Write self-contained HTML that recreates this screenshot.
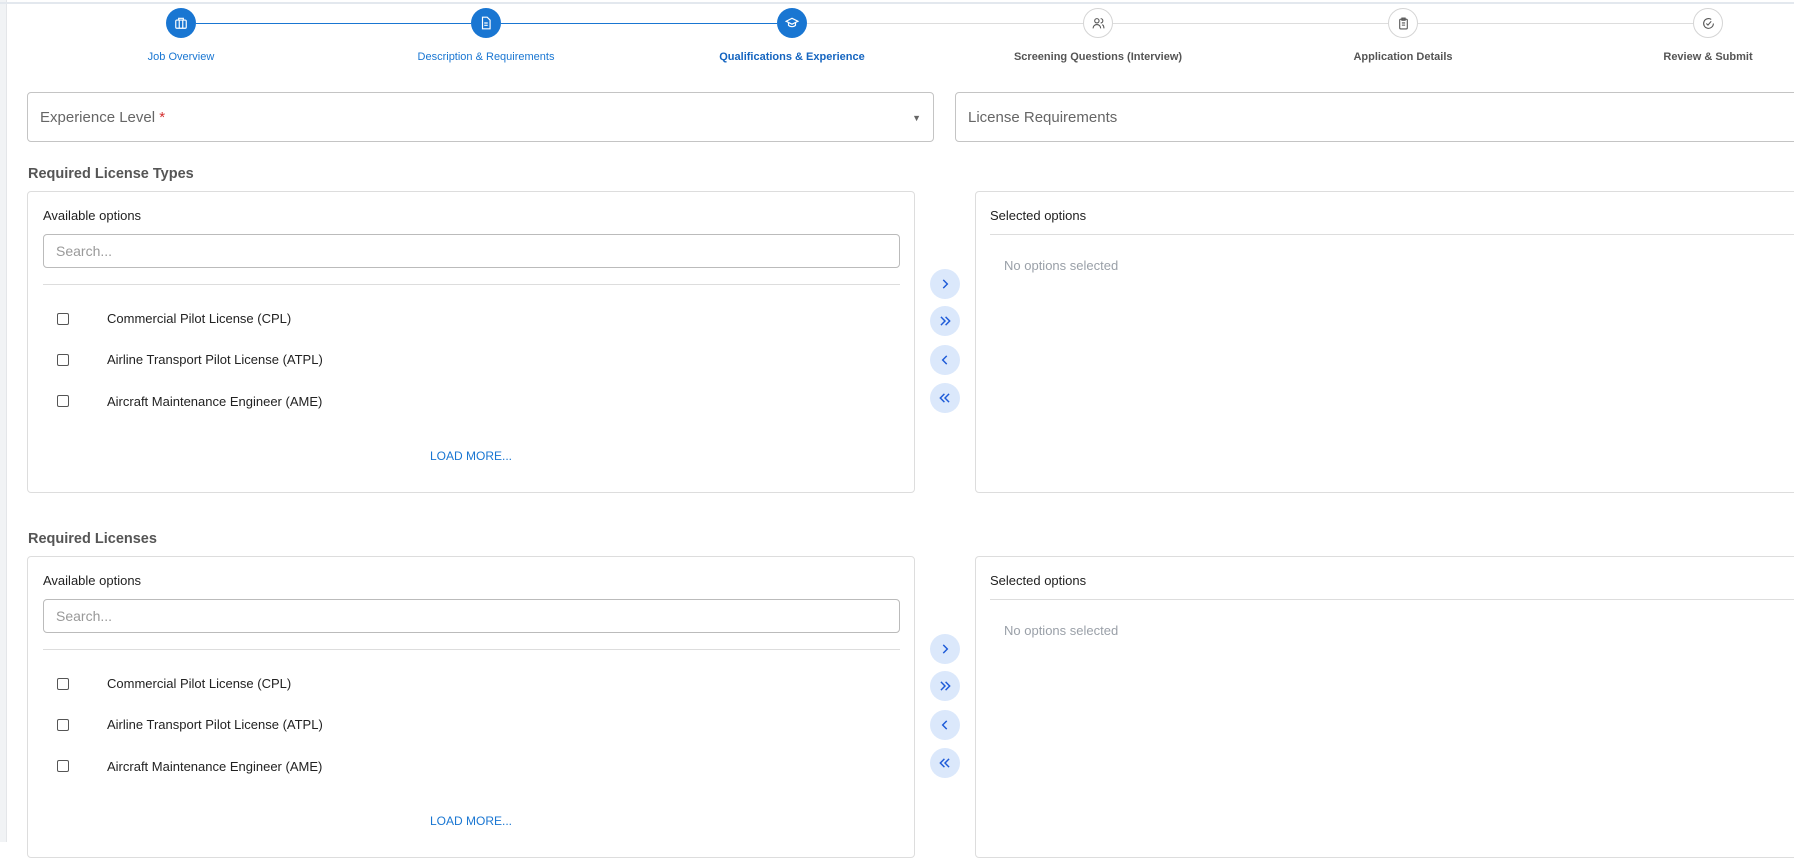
<!DOCTYPE html>
<html><head><meta charset="utf-8"><style>
*{box-sizing:border-box;margin:0;padding:0}
body{width:1794px;height:842px;overflow:hidden;background:#fff;font-family:"Liberation Sans",sans-serif;position:relative;color:#222}
.a{position:absolute}
.topline{left:0;top:0;width:1794px;height:4px;border-bottom:2px solid #e3e8ee}
.lbar{left:0;top:0;width:7px;height:842px;background:#f1f3f5;border-right:1px solid #e4e6e9}
.circ{width:30px;height:30px;border-radius:50%;display:flex;align-items:center;justify-content:center}
.done{background:#1976d2}
.todo{background:#fff;border:1px solid #d5d5d5}
.lbl{font-size:11px;top:51px;transform:translateX(-50%);white-space:nowrap}
.line{height:1px;top:23px}
.field{border:1px solid #c4c4c4;border-radius:4px;height:50px;font-size:15px;color:#666;padding:0 0 0 12px;line-height:50px}
.h{font-size:14.5px;font-weight:bold;color:#555}
.panel{border:1px solid #ddd;border-radius:4px}
.t13{font-size:13px;color:#222}
.search{border:1px solid #bbb;border-radius:4px;height:34px;font-size:14px;color:#999;padding-left:12px;line-height:32px}
.div{height:1px;background:#ddd}
.cb{width:12px;height:12px;border:1.5px solid #555;border-radius:2px}
.item{font-size:13px;color:#222}
.lm{font-size:12px;color:#1976d2;transform:translateX(-50%)}
.btn{width:30px;height:30px;border-radius:50%;background:#dbe8fb;display:flex;align-items:center;justify-content:center}
.nos{font-size:13px;color:#9aa0a8}
</style></head><body>
<div class="a lbar"></div>
<div class="a topline"></div>

<div class="a line" style="left:196px;width:275px;background:#1976d2"></div>
<div class="a line" style="left:501px;width:276px;background:#1976d2"></div>
<div class="a line" style="left:807px;width:276px;background:#ddd"></div>
<div class="a line" style="left:1113px;width:275px;background:#ddd"></div>
<div class="a line" style="left:1418px;width:275px;background:#ddd"></div>

<div class="a circ done" style="left:166px;top:8px"><svg width="14" height="14" viewBox="0 0 24 24" fill="none" stroke="#fff" stroke-width="2"><rect x="3" y="7" width="18" height="14" rx="2"/><path d="M8 7V4h8v3M9 7v14M15 7v14"/></svg></div>
<div class="a circ done" style="left:471px;top:8px"><svg width="14" height="14" viewBox="0 0 24 24" fill="none" stroke="#fff" stroke-width="2"><path d="M6 2h8l5 5v15H6z"/><path d="M9 12h6M9 16h6"/></svg></div>
<div class="a circ done" style="left:777px;top:8px"><svg width="14" height="14" viewBox="0 0 24 24" fill="none" stroke="#fff" stroke-width="2"><path d="M2 9l10-5 10 5-10 5z"/><path d="M6 11v5c3 3 9 3 12 0v-5"/></svg></div>
<div class="a circ todo" style="left:1083px;top:8px"><svg width="13" height="13" viewBox="0 0 24 24" fill="none" stroke="#555" stroke-width="2"><circle cx="9" cy="7" r="4"/><path d="M2 21c0-4 3-7 7-7s7 3 7 7M16 3a4 4 0 010 8M19 14c2 1 3 4 3 7"/></svg></div>
<div class="a circ todo" style="left:1388px;top:8px"><svg width="13" height="13" viewBox="0 0 24 24" fill="none" stroke="#555" stroke-width="2"><rect x="5" y="4" width="14" height="18" rx="2"/><rect x="9" y="2" width="6" height="4"/><path d="M9 11h6M9 15h6"/></svg></div>
<div class="a circ todo" style="left:1693px;top:8px"><svg width="13" height="13" viewBox="0 0 24 24" fill="none" stroke="#555" stroke-width="2"><path d="M21 12a9 9 0 11-4-7.5"/><path d="M8 12l3 3 6-7"/></svg></div>

<div class="a lbl" style="left:181px;color:#1976d2">Job Overview</div>
<div class="a lbl" style="left:486px;color:#1976d2">Description &amp; Requirements</div>
<div class="a lbl" style="left:792px;color:#1565c0;font-weight:bold">Qualifications &amp; Experience</div>
<div class="a lbl" style="left:1098px;color:#555;font-weight:bold">Screening Questions (Interview)</div>
<div class="a lbl" style="left:1403px;color:#555;font-weight:bold">Application Details</div>
<div class="a lbl" style="left:1708px;color:#555;font-weight:bold">Review &amp; Submit</div>

<div class="a field" style="left:27px;top:92px;width:907px">Experience Level <span style="color:#d32f2f">*</span><span class="a" style="right:12px;top:0;font-size:9px;color:#666">▼</span></div>
<div class="a field" style="left:955px;top:92px;width:860px">License Requirements</div>

<div class="a h" style="left:28px;top:166px">Required License Types</div>
<div class="a h" style="left:28px;top:531px">Required Licenses</div>

<div class="a panel" style="left:27px;top:191px;width:888px;height:302px"></div>
<div class="a panel" style="left:975px;top:191px;width:840px;height:302px"></div>
<div class="a panel" style="left:27px;top:556px;width:888px;height:302px"></div>
<div class="a panel" style="left:975px;top:556px;width:840px;height:302px"></div>

<div class="a t13" style="left:43px;top:208px">Available options</div>
<div class="a search" style="left:43px;top:234px;width:857px">Search...</div>
<div class="a div" style="left:43px;top:284px;width:857px"></div>
<div class="a cb" style="left:57px;top:313px"></div><div class="a item" style="left:107px;top:311px">Commercial Pilot License (CPL)</div>
<div class="a cb" style="left:57px;top:354px"></div><div class="a item" style="left:107px;top:352px">Airline Transport Pilot License (ATPL)</div>
<div class="a cb" style="left:57px;top:395px"></div><div class="a item" style="left:107px;top:394px">Aircraft Maintenance Engineer (AME)</div>
<div class="a lm" style="left:471px;top:449px">LOAD MORE...</div>
<div class="a t13" style="left:990px;top:208px">Selected options</div>
<div class="a div" style="left:990px;top:234px;width:804px"></div>
<div class="a nos" style="left:1004px;top:258px">No options selected</div>

<div class="a t13" style="left:43px;top:573px">Available options</div>
<div class="a search" style="left:43px;top:599px;width:857px">Search...</div>
<div class="a div" style="left:43px;top:649px;width:857px"></div>
<div class="a cb" style="left:57px;top:678px"></div><div class="a item" style="left:107px;top:676px">Commercial Pilot License (CPL)</div>
<div class="a cb" style="left:57px;top:719px"></div><div class="a item" style="left:107px;top:717px">Airline Transport Pilot License (ATPL)</div>
<div class="a cb" style="left:57px;top:760px"></div><div class="a item" style="left:107px;top:759px">Aircraft Maintenance Engineer (AME)</div>
<div class="a lm" style="left:471px;top:814px">LOAD MORE...</div>
<div class="a t13" style="left:990px;top:573px">Selected options</div>
<div class="a div" style="left:990px;top:599px;width:804px"></div>
<div class="a nos" style="left:1004px;top:623px">No options selected</div>

<div class="a btn" style="left:930px;top:269px"><svg width="14" height="14" viewBox="0 0 24 24" fill="none" stroke="#1e5bd8" stroke-width="2.5"><path d="M9 5l7 7-7 7"/></svg></div>
<div class="a btn" style="left:930px;top:306px"><svg width="14" height="14" viewBox="0 0 24 24" fill="none" stroke="#1e5bd8" stroke-width="2.5"><path d="M5 5l7 7-7 7M13 5l7 7-7 7"/></svg></div>
<div class="a btn" style="left:930px;top:345px"><svg width="14" height="14" viewBox="0 0 24 24" fill="none" stroke="#1e5bd8" stroke-width="2.5"><path d="M15 5l-7 7 7 7"/></svg></div>
<div class="a btn" style="left:930px;top:383px"><svg width="14" height="14" viewBox="0 0 24 24" fill="none" stroke="#1e5bd8" stroke-width="2.5"><path d="M11 5l-7 7 7 7M19 5l-7 7 7 7"/></svg></div>

<div class="a btn" style="left:930px;top:634px"><svg width="14" height="14" viewBox="0 0 24 24" fill="none" stroke="#1e5bd8" stroke-width="2.5"><path d="M9 5l7 7-7 7"/></svg></div>
<div class="a btn" style="left:930px;top:671px"><svg width="14" height="14" viewBox="0 0 24 24" fill="none" stroke="#1e5bd8" stroke-width="2.5"><path d="M5 5l7 7-7 7M13 5l7 7-7 7"/></svg></div>
<div class="a btn" style="left:930px;top:710px"><svg width="14" height="14" viewBox="0 0 24 24" fill="none" stroke="#1e5bd8" stroke-width="2.5"><path d="M15 5l-7 7 7 7"/></svg></div>
<div class="a btn" style="left:930px;top:748px"><svg width="14" height="14" viewBox="0 0 24 24" fill="none" stroke="#1e5bd8" stroke-width="2.5"><path d="M11 5l-7 7 7 7M19 5l-7 7 7 7"/></svg></div>
</body></html>
